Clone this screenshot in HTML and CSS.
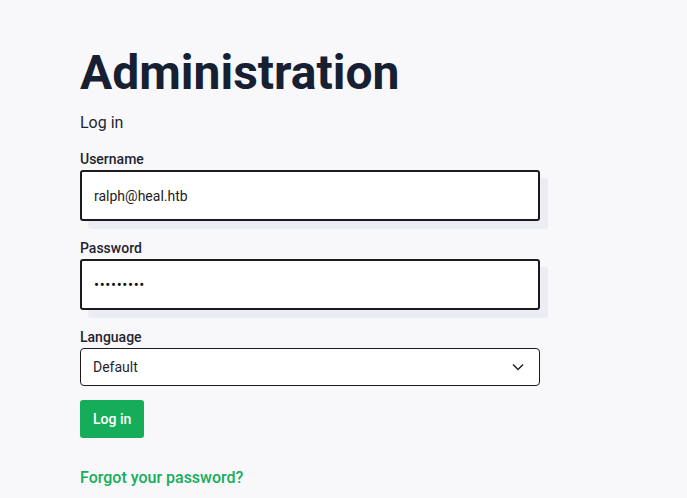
FILE: index.html
```html
<!DOCTYPE html>
<html lang="en">
<head>
<meta charset="utf-8">
<title>Administration</title>
<link rel="stylesheet" href="styles.css">
</head>
<body>
<main class="page">
  <h1 class="title">Administration</h1>
  <p class="subtitle">Log in</p>
  <form class="form">
    <div class="field">
      <label class="label" for="u">Username</label>
      <div class="input-wrap">
        <input class="input" id="u" type="text" value="ralph@heal.htb">
      </div>
    </div>
    <div class="field">
      <label class="label" for="p">Password</label>
      <div class="input-wrap">
        <input class="input input-password" id="p" type="password" value="aaaaaaaaa">
      </div>
    </div>
    <div class="field">
      <label class="label" for="l">Language</label>
      <div class="select">
        <span class="select-value">Default</span>
        <svg class="chevron" width="12" height="8" viewBox="0 0 12 8"><path d="M1 1.5l5 5 5-5" fill="none" stroke="#222" stroke-width="1.5"/></svg>
      </div>
    </div>
    <button class="btn" type="button">Log in</button>
    <a class="forgot" href="#">Forgot your password?</a>
  </form>
</main>
</body>
</html>
```
FILE: styles.css
```css
html, body {
  margin: 0;
  padding: 0;
  background: #f8f8fa;
  font-family: Roboto, "Liberation Sans", sans-serif;
  color: #1f2430;
}
.page {
  padding: 43px 0 0 80px;
  width: 460px;
}
.title {
  margin: 0;
  font-size: 48px;
  line-height: 60px;
  font-weight: 700;
  color: #162032;
  letter-spacing: 0;
}
.subtitle {
  margin: 8px 0 0;
  font-size: 16px;
  line-height: 24px;
  color: #1f2430;
}
.form {
  display: flex;
  flex-direction: column;
  margin-top: 14px;
}
.field {
  display: flex;
  flex-direction: column;
  margin-bottom: 17px;
}
.label {
  font-size: 14px;
  font-weight: 500;
  line-height: 20px;
  margin-bottom: 1px;
  color: #1f2430;
}
.input-wrap {
  position: relative;
  box-shadow: 8px 8px 0 #ececf4;
  border-radius: 3px;
}
.input {
  box-sizing: border-box;
  width: 460px;
  height: 51px;
  border: 2px solid #1b1b1f;
  border-radius: 3px;
  background: #fff;
  padding: 0 12px;
  font-family: inherit;
  font-size: 14px;
  color: #222;
  outline: none;
  display: block;
}
.input-password {
  font-size: 15px;
  letter-spacing: 0.6px;
  color: #111;
}
.select {
  box-sizing: border-box;
  width: 460px;
  height: 38px;
  border: 1px solid #1b1b1f;
  border-radius: 4px;
  background: #fff;
  display: flex;
  align-items: center;
  justify-content: space-between;
  padding: 0 15px 0 12px;
  font-size: 14px;
}
.btn {
  align-self: flex-start;
  margin-top: -3px;
  height: 38px;
  padding: 0 13px;
  background: #16ad5a;
  color: #fff;
  border: none;
  border-radius: 3px;
  font-family: inherit;
  font-size: 14px;
  font-weight: 500;
}
.forgot {
  margin-top: 30px;
  font-size: 16px;
  font-weight: 500;
  color: #16ad5a;
  text-decoration: none;
}
```
